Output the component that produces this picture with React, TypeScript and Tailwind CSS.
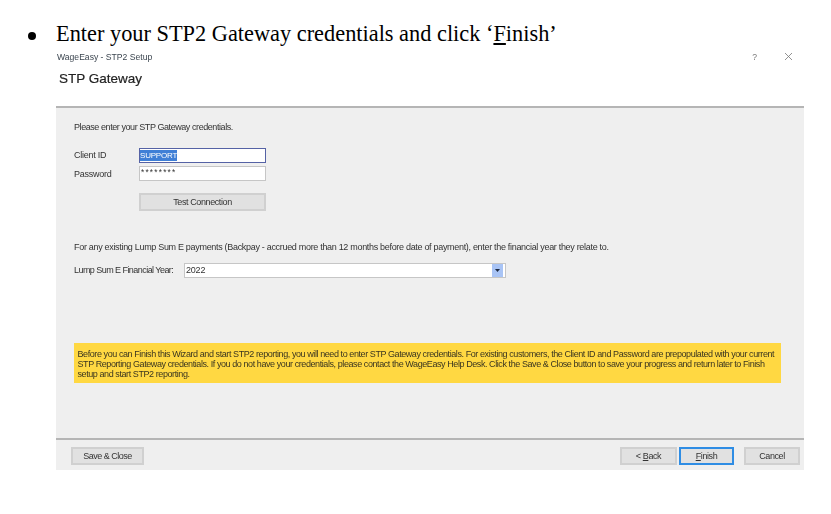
const SANS = "font-['Liberation_Sans',sans-serif]";

function WizardButton({
  children,
  className = "",
  focused = false,
}: {
  children: React.ReactNode;
  className?: string;
  focused?: boolean;
}) {
  return (
    <div
      className={`flex h-[18px] items-center justify-center border-2 bg-[#e1e1e1] pt-px text-[9px] tracking-[-0.4px] text-[#333] ${
        focused ? "border-[#2f8de4]" : "border-[#d0d0d0]"
      } ${className}`}
    >
      {children}
    </div>
  );
}

export default function App() {
  return (
    <div className="h-[514px] w-[831px] overflow-hidden bg-white font-['Liberation_Serif',serif] text-black">
      <div className="flex h-[50px] items-center pl-[28px] pt-[19px]">
        <span className="mt-[2px] h-[8px] w-[8px] rounded-full bg-black" />
        <span className="ml-[20px] text-[22.35px] leading-none">
          Enter your STP2 Gateway credentials and click ‘<u>F</u>inish’
        </span>
      </div>

      <div className={`ml-[56px] w-[748px] blur-[0.3px] ${SANS}`}>
        <div className="flex h-[14px] items-center justify-between pl-[1px] pr-[11px] text-[8.6px] text-[#3c4650]">
          <span>WageEasy - STP2 Setup</span>
          <div className="flex items-center gap-[27px] text-[#777]">
            <span>?</span>
            <svg width="9" height="9" viewBox="0 0 9 9" fill="none" stroke="#777" strokeWidth="0.8">
              <path d="M1 1l7 7M8 1l-7 7" />
            </svg>
          </div>
        </div>

        <div className="flex h-[29px] items-center pl-[3px] pt-[2px] text-[13.5px] text-[#222] [-webkit-text-stroke:0.2px_#222]">
          STP Gateway
        </div>
        <div className="h-[13px]" />

        <div className="flex h-[364px] flex-col border-t-2 border-[#b5b5b5] bg-[#efefef]">
          <div className="flex flex-1 flex-col pl-[18px] text-[9px] text-[#333]">
            <p className="mt-[13px] leading-[12px] tracking-[-0.43px]">Please enter your STP Gateway credentials.</p>

            <div className="mt-[15px] flex h-[15px] items-center tracking-[-0.25px]">
              <span className="w-[65px]">Client ID</span>
              <div className="flex h-[15px] w-[127px] items-center border border-[#5562a5] bg-white">
                <span className="bg-[#3f7fd6] text-[8px] leading-[11px] tracking-[-0.2px] text-white">SUPPORT</span>
              </div>
            </div>
            <div className="mt-[3px] flex h-[15px] items-center tracking-[-0.25px]">
              <span className="w-[65px] pt-[2px]">Password</span>
              <div className="flex h-[15px] w-[127px] items-start border border-[#c6c6c6] bg-white pl-[1px] text-[8.3px] leading-[10px] tracking-[1.2px]">
                ********
              </div>
            </div>
            <WizardButton className="ml-[65px] mt-[12px] w-[127px]">Test Connection</WizardButton>

            <p className="mt-[30px] leading-[12px] tracking-[-0.31px]">
              For any existing Lump Sum E payments (Backpay - accrued more than 12 months before date of payment), enter the financial year they relate to.
            </p>

            <div className="mt-[10px] flex items-center">
              <span className="w-[110px] whitespace-nowrap pt-px tracking-[-0.55px]">Lump Sum E Financial Year:</span>
              <div className="flex h-[15px] w-[322px] items-center justify-between border border-[#c6c6c6] bg-white pl-[1px] pr-[2px]">
                <span className="pt-px tracking-[-0.2px]">2022</span>
                <div className="flex h-[13px] w-[11px] items-center justify-center bg-[#a9c4f5]">
                  <svg width="5" height="3" viewBox="0 0 5 3" fill="#1d2a44">
                    <path d="M0 0h5L2.5 3z" />
                  </svg>
                </div>
              </div>
            </div>

            <div className="mt-[65px] w-[707px] whitespace-nowrap bg-[#ffd842] pb-[4px] pl-[3.5px] pr-[4px] pt-[6px] leading-[10px] tracking-[-0.42px] text-[#3a3520]">
              <div>Before you can Finish this Wizard and start STP2 reporting, you will need to enter STP Gateway credentials. For existing customers, the Client ID and Password are prepopulated with your current</div>
              <div>STP Reporting Gateway credentials. If you do not have your credentials, please contact the WageEasy Help Desk. Click the Save &amp; Close button to save your progress and return later to Finish</div>
              <div>setup and start STP2 reporting.</div>
            </div>
          </div>

          <div className="flex h-[32px] items-center justify-between border-t-2 border-[#b5b5b5] pl-[15px] pr-[4px] pt-[2px]">
            <WizardButton className="w-[73px] tracking-[-0.5px]">Save &amp; Close</WizardButton>
            <div className="flex items-center">
              <WizardButton className="w-[57px]">
                &lt;&nbsp;<u>B</u>ack
              </WizardButton>
              <WizardButton focused className="ml-[2px] w-[55px]">
                <u>F</u>inish
              </WizardButton>
              <WizardButton className="ml-[10px] w-[56px]">Cancel</WizardButton>
            </div>
          </div>
        </div>
      </div>
    </div>
  );
}
